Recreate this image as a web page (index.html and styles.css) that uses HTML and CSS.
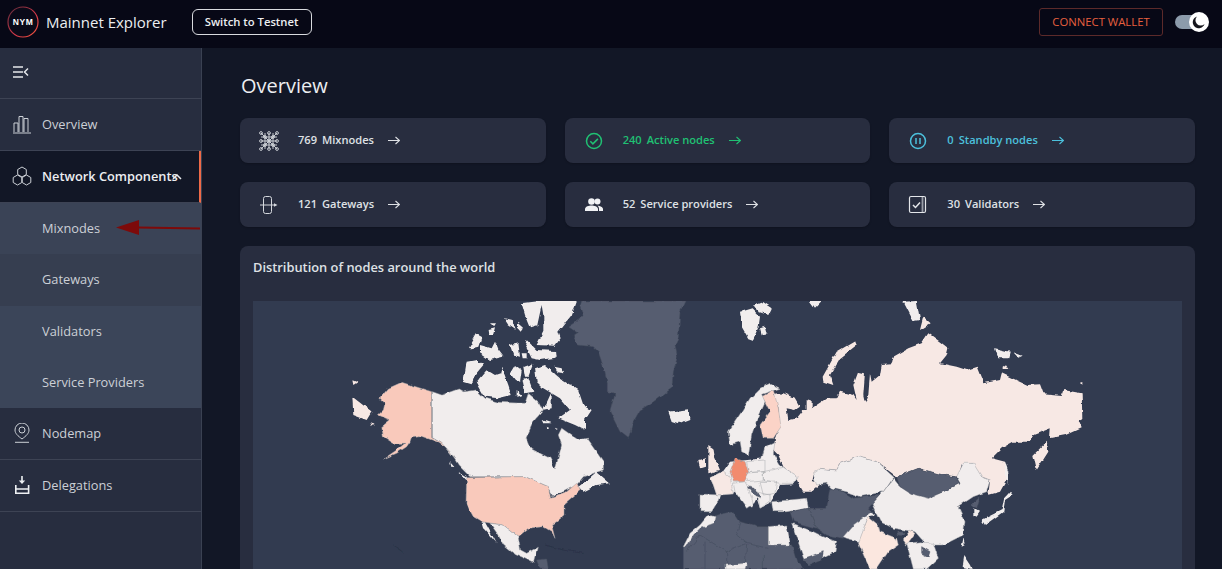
FILE: index.html
```html
<!DOCTYPE html>
<html lang="en">
<head>
<meta charset="utf-8">
<title>Mainnet Explorer</title>
<link rel="stylesheet" href="styles.css">
</head>
<body>
<header class="topbar">
  <svg class="logo" width="32" height="32" viewBox="0 0 32 32">
    <defs><linearGradient id="ring" x1="0" y1="0" x2="1" y2="1"><stop offset="0" stop-color="#5a2a3a"/><stop offset=".6" stop-color="#d8394a"/><stop offset="1" stop-color="#f0553a"/></linearGradient></defs>
    <circle cx="16" cy="16" r="15" fill="#0a0a18" stroke="url(#ring)" stroke-width="1.2"/>
    <text x="16" y="19" text-anchor="middle" class="logo-text">NYM</text>
  </svg>
  <span class="brand">Mainnet Explorer</span>
  <button class="switch-btn">Switch to Testnet</button>
  <div class="topbar-right">
    <button class="wallet-btn">CONNECT WALLET</button>
    <div class="toggle">
      <span class="thumb"><svg width="20" height="20" viewBox="0 0 20 20"><path d="M8 4.500a6 6 0 1 0 7.500 7.500a5 5 0 0 1-7.500-7.500z" fill="#15151c"/></svg></span>
    </div>
  </div>
</header>
<div class="shell">
  <nav class="sidebar">
    <div class="collapse-row">
      <svg width="16" height="14" viewBox="0 0 16 14" fill="none" stroke="#e6e8ec" stroke-width="1.500"><path d="M0 2h10M0 7h10M0 12h10M15 3.500 11.500 7l3.500 3.500"/></svg>
    </div>
    <a class="nav-item">
      <svg class="nav-icon" width="20" height="20" viewBox="0 0 20 20" fill="none" stroke="#ccd0d6"><path d="M2 18V9h4v9M7 18V2.500h4V18M12 18V4.500h4V18M1 19h18"/></svg>
      <span>Overview</span>
    </a>
    <a class="nav-item nav-open">
      <svg class="nav-icon" width="20" height="20" viewBox="0 0 20 20" fill="none" stroke="#ccd0d6"><path d="M10 1l4.300 2.500v5L10 11 5.700 8.500v-5zM5.500 9l4.300 2.500v5L5.500 19 1.200 16.500v-5zM14.500 9l4.300 2.500v5L14.500 19l-4.300-2.500v-5z"/></svg>
      <span>Network Components</span>
      <svg class="chev" width="10" height="6" viewBox="0 0 10 6" fill="none" stroke="#e8eaee" stroke-width="1.500"><path d="M1 5l4-4 4 4"/></svg>
    </a>
    <a class="sub-item sub-first">Mixnodes</a>
    <a class="sub-item sub-second">Gateways</a>
    <a class="sub-item">Validators</a>
    <a class="sub-item">Service Providers</a>
    <a class="nav-item">
      <svg class="nav-icon" width="20" height="20" viewBox="0 0 20 20" fill="none" stroke="#ccd0d6"><path d="M10 16c-4-3-7-5.500-7-9a7 7 0 0 1 14 0c0 3.500-3 6-7 9z"/><circle cx="10" cy="7" r="3"/><path d="M3 19.300h14"/></svg>
      <span>Nodemap</span>
    </a>
    <a class="nav-item">
      <svg class="nav-icon" width="20" height="20" viewBox="0 0 20 20" fill="none" stroke="#eef0f3" stroke-width="1.600"><path d="M10 1v6" /><path d="M6.800 5.500h6.400L10 9z" fill="#eef0f3" stroke="none"/><path d="M3.800 10v8.200h12.800V10M3.800 14h12.800"/></svg>
      <span>Delegations</span>
    </a>
    <svg class="red-arrow" width="84" height="18" viewBox="0 0 84 18"><path d="M23 8.500 L84 9.500" stroke="#7d0a0a" stroke-width="2"/><path d="M0 8.500 23 1v15z" fill="#7d0a0a"/></svg>
  </nav>
  <main class="main">
    <h1 class="title">Overview</h1>
    <section class="cards">
      <a class="card">
        <svg class="card-icon" width="20" height="20" viewBox="0 0 20 20" fill="none" stroke="#d5d8dd" stroke-width=".9"><circle cx="2" cy="2" r="1.400"/><circle cx="10" cy="2" r="1.400"/><circle cx="18" cy="2" r="1.400"/><circle cx="2" cy="10" r="1.400"/><circle cx="18" cy="10" r="1.400"/><circle cx="2" cy="18" r="1.400"/><circle cx="10" cy="18" r="1.400"/><circle cx="18" cy="18" r="1.400"/><circle cx="6" cy="6" r="1.400"/><circle cx="14" cy="6" r="1.400"/><circle cx="6" cy="14" r="1.400"/><circle cx="14" cy="14" r="1.400"/><circle cx="10" cy="10" r="2"/><path d="M2 2l16 16M18 2 2 18M2 10h16M10 2v16M2 6h16M2 14h16M6 2v16M14 2v16"/></svg>
        <span class="num">769</span><span class="lbl">Mixnodes</span>
        <svg class="arrow" width="12" height="9" viewBox="0 0 12 9" fill="none" stroke="currentColor" stroke-width="1.100"><path d="M0 4.500h11M7.500 1l4 3.500-4 3.500"/></svg>
      </a>
      <a class="card card-green">
        <svg class="card-icon" width="20" height="20" viewBox="0 0 20 20" fill="none" stroke="#20c073" stroke-width="1.500"><circle cx="10" cy="10" r="7.500"/><path d="M6.300 10.300l2.600 2.600 5-5"/></svg>
        <span class="num">240</span><span class="lbl">Active nodes</span>
        <svg class="arrow" width="12" height="9" viewBox="0 0 12 9" fill="none" stroke="currentColor" stroke-width="1.100"><path d="M0 4.500h11M7.500 1l4 3.500-4 3.500"/></svg>
      </a>
      <a class="card card-blue">
        <svg class="card-icon" width="20" height="20" viewBox="0 0 20 20" fill="none" stroke="#4cc0dc" stroke-width="1.500"><circle cx="10" cy="10" r="7.500"/><path d="M8 7v6M12 7v6"/></svg>
        <span class="num">0</span><span class="lbl">Standby nodes</span>
        <svg class="arrow" width="12" height="9" viewBox="0 0 12 9" fill="none" stroke="currentColor" stroke-width="1.100"><path d="M0 4.500h11M7.500 1l4 3.500-4 3.500"/></svg>
      </a>
      <a class="card">
        <svg class="card-icon" width="20" height="20" viewBox="0 0 20 20" fill="none" stroke="#d5d8dd" stroke-width="1"><rect x="4.500" y="1.500" width="8" height="17" rx="2"/><path d="M1 10h14"/><path d="M15 8.200 18.500 10 15 11.800z" fill="#d5d8dd" stroke="none"/></svg>
        <span class="num">121</span><span class="lbl">Gateways</span>
        <svg class="arrow" width="12" height="9" viewBox="0 0 12 9" fill="none" stroke="currentColor" stroke-width="1.100"><path d="M0 4.500h11M7.500 1l4 3.500-4 3.500"/></svg>
      </a>
      <a class="card">
        <svg class="card-icon" width="20" height="20" viewBox="0 0 20 20"><g fill="#f0f1f4"><circle cx="7.500" cy="6.500" r="3.300"/><circle cx="13.500" cy="6.500" r="3"/><path d="M1 16v-2c0-2.500 4-3.500 6.500-3.500S14 11.500 14 14v2z"/><path d="M15 16v-2.200c0-1.300-.7-2.300-1.600-3 2.400.2 5.600 1.200 5.600 3.200v2z"/></g></svg>
        <span class="num">52</span><span class="lbl">Service providers</span>
        <svg class="arrow" width="12" height="9" viewBox="0 0 12 9" fill="none" stroke="currentColor" stroke-width="1.100"><path d="M0 4.500h11M7.500 1l4 3.500-4 3.500"/></svg>
      </a>
      <a class="card">
        <svg class="card-icon" width="20" height="20" viewBox="0 0 20 20" fill="none" stroke="#e4e6ea" stroke-width="1.200"><rect x="1.500" y="1.500" width="16" height="16" rx="1.500"/><path d="M14.500 2v15" stroke-width="1.800" stroke="#9a9ea8"/><path d="M5 10l2.500 2.500L12 7.500" stroke-width="1.500"/></svg>
        <span class="num">30</span><span class="lbl">Validators</span>
        <svg class="arrow" width="12" height="9" viewBox="0 0 12 9" fill="none" stroke="currentColor" stroke-width="1.100"><path d="M0 4.500h11M7.500 1l4 3.500-4 3.500"/></svg>
      </a>
    </section>
    <section class="map-card">
      <h2 class="map-title">Distribution of nodes around the world</h2>
      <div class="map">
        <svg class="map-svg" width="929" height="300" viewBox="253 301 929 300">
          <defs>
            <filter id="rough" x="0" y="0" width="100%" height="100%" filterUnits="objectBoundingBox">
              <feTurbulence type="fractalNoise" baseFrequency=".13" numOctaves="2" seed="4" result="n"/>
              <feDisplacementMap in="SourceGraphic" in2="n" scale="4" xChannelSelector="R" yChannelSelector="G"/>
              <feGaussianBlur stdDeviation=".35"/>
            </filter>
          </defs>
          <g filter="url(#rough)">
          <g transform="translate(250 295) scale(.33333)" class="land">
            <path class="dark" d="M995,18 1305,18 1290,50 1285,130 1275,150 1282,185 1270,230 1265,280 1210,320 1170,345 1150,380 1135,430 1110,410 1095,380 1080,350 1095,295 1072,290 1072,265 1065,230 1045,170 1030,155 985,150 970,125 985,115 955,95 1000,65 990,35Z"/>
            <path class="pale nb" d="M815,25 870,18 980,18 965,60 945,85 925,110 932,130 915,152 860,150 880,110 880,60 875,30 862,90 840,97 825,60Z"/>
            <path class="pale nb" d="M830,135 860,165 915,168 917,188 870,195 845,190 825,150Z"/>
            <path class="pale nb" d="M657,158 680,118 695,125 685,155 665,160ZM690,150 725,160 735,140 745,165 760,185 720,195 690,175ZM762,70 785,75 797,105 775,90ZM805,80 822,95 812,110 803,100ZM716,105 735,100 730,120 718,120ZM720,85 735,85 730,93ZM780,150 805,145 810,185 790,180ZM815,175 830,175 830,190 818,190Z"/>
            <path class="pale nb" d="M640,260 650,200 680,195 700,210 675,240 665,268ZM680,260 710,225 735,240 750,235 755,215 775,270 785,300 745,310 705,305 690,280ZM780,235 795,210 815,225 810,260 795,255ZM820,215 850,205 835,245 825,245ZM818,255 835,250 850,290 825,295ZM855,220 885,210 930,250 985,285 1000,330 1025,345 1005,375 1005,405 975,390 925,370 960,345 930,310 880,280 860,260ZM912,215 935,220 940,235 920,232ZM800,285 815,300 800,305Z"/>
            <path class="pale" d="M547,290 575,300 625,282 640,290 680,285 705,310 745,322 825,325 835,295 870,325 880,345 850,380 828,430 840,460 900,490 915,522 925,490 935,450 925,420 935,400 985,435 1010,430 1060,500 1060,525 1000,545 980,570 940,590 905,605 895,575 825,545 660,545 625,510 612,490 575,445 547,428Z"/>
            <path class="pale nb" d="M880,345 905,290 905,340ZM875,375 905,385 880,385ZM1005,560 1040,530 1080,565 1040,570 1000,590 985,575ZM600,498 615,515 605,515ZM625,530 650,545 655,562 640,545ZM890,395 900,400 895,405ZM915,395 925,400 920,405Z"/>
            <path class="sal" d="M455,262 545,290 545,428 575,445 600,470 612,490 590,460 560,440 510,422 485,425 480,440 470,455 440,475 400,492 440,465 465,445 430,445 400,425 395,395 420,375 385,360 400,345 405,325 390,310 415,280Z"/>
            <path class="sal" d="M650,548 825,545 895,575 902,610 945,595 980,565 992,585 945,625 945,660 920,680 905,690 915,730 905,710 880,695 835,700 805,725 760,690 695,680 670,665 648,625Z"/>
            <path class="pale" d="M720,685 760,690 805,725 812,765 830,775 862,757 850,802 825,790 790,775 760,750 745,720Z"/>
            <path class="pale nb" d="M695,682 705,682 740,745 700,700Z"/>
            <path class="dark" d="M860,795 890,792 895,822 870,822Z"/>
            <path class="rose nb" d="M307,305 365,350 350,375 310,360ZM307,256 322,262 310,270ZM358,385 375,390 362,392Z"/>
            <path class="pale nb" d="M1255,350 1315,343 1318,372 1285,385 1265,378Z"/>
            <path class="faint" d="M885,750 940,765 1000,775M430,750 460,770"/>
          </g>
          <g transform="translate(680 295) scale(.33333)" class="land">
            <path class="pale nb" d="M180,50 215,40 240,65 235,100 220,135 205,130 185,95ZM220,30 245,20 275,40 265,60 235,50ZM240,100 255,95 260,115 245,118ZM390,18 425,18 405,38 395,25ZM670,20 710,18 720,75 700,78ZM945,160 990,170 985,190 955,190ZM1000,172 1028,182 1015,188Z"/>
            <path class="rose nb" d="M730,65 752,85 720,105ZM428,245 470,170 525,138 530,150 480,190 450,240 460,270 430,260ZM965,215 975,208 985,222 965,222ZM1200,260 1207,258 1207,270ZM1060,480 1100,440 1105,470 1070,525Z"/>
            <path class="rose nb" d="M745,115 780,140 805,160 800,180 780,205 830,215 860,225 890,215 910,265 960,255 965,235 1040,270 1080,268 1090,295 1145,300 1150,285 1205,295 1207,370 1195,375 1205,400 1160,420 1110,430 1112,400 1060,420 1050,440 1000,440 965,460 935,490 975,500 985,545 960,590 925,600 930,555 905,545 875,505 845,510 835,545 790,540 715,520 650,545 590,500 535,485 480,505 470,525 420,520 400,540 398,555 425,565 395,590 370,590 355,565 345,540 310,515 295,480 280,465 285,430 300,390 295,340 280,300 310,295 345,310 360,335 345,345 320,340 325,375 350,370 370,345 380,345 380,315 395,320 395,340 440,310 470,310 480,290 520,300 530,315 520,270 535,230 555,235 550,300 560,345 548,345 565,300 570,235 575,260 600,240 605,210 635,208 640,185 685,160 725,145Z"/>
            <path class="sal2" d="M245,305 280,285 295,340 303,395 280,430 250,430 240,390 270,350 255,320Z"/>
            <path class="pale" d="M145,410 185,350 210,310 240,280 270,265 300,280 245,298 255,320 230,375 215,420 205,480 185,470 180,440 150,450Z"/>
            <path class="pale" d="M255,455 285,440 280,475 300,510 255,520 245,490Z"/>
            <path class="pale nb" d="M90,548 130,528 150,500 255,490 300,510 355,545 340,568 300,570 285,600 270,625 240,640 230,610 215,640 195,620 165,590 155,597 110,600 100,570Z"/>
            <path class="rose nb" d="M85,450 100,460 105,490 120,525 85,535 85,490ZM55,495 75,490 75,515 60,520Z"/>
            <path class="rose" d="M90,548 130,528 150,545 155,570 160,597 110,600 100,570Z"/>
            <path class="pale" d="M60,597 120,600 110,625 95,650 60,650Z"/>
            <path class="pale" d="M200,500 255,495 255,530 205,532ZM192,535 250,530 250,555 200,560ZM250,530 310,517 355,545 340,565 300,565 250,555ZM240,560 290,558 285,595 250,600ZM160,565 195,560 205,580 220,625 200,640 165,590ZM225,590 270,600 270,620 240,640 235,610ZM275,620 380,610 385,640 320,650 280,650Z"/>
            <path class="dark" d="M205,575 225,580 240,610 225,605Z"/>
            <path class="germ" d="M165,490 195,500 205,530 190,560 160,560 150,530Z"/>
            <path class="pale" d="M398,535 420,520 470,525 480,505 535,485 590,500 640,545 610,590 540,605 500,590 455,580 440,565 410,570Z"/>
            <path class="pale" d="M575,625 610,590 640,550 660,575 740,605 790,590 840,565 830,545 850,505 880,505 905,545 930,555 920,590 880,605 835,635 855,680 850,720 790,750 740,750 705,710 640,700 600,680Z"/>
            <path class="dark" d="M650,545 715,520 790,540 825,545 840,565 790,590 745,610 690,595 660,575Z"/>
            <path class="dark" d="M385,640 440,640 450,580 490,590 520,610 600,600 565,640 580,650 520,690 490,730 440,720 410,700ZM330,650 385,640 410,700 340,680ZM875,630 900,605 890,640Z"/>
            <path class="pale" d="M490,725 520,690 575,650 585,660 565,665 540,740 500,730Z"/>
            <path class="peach" d="M535,745 565,665 595,690 600,710 650,730 655,750 625,770 595,815 590,822 570,822 555,790Z"/>
            <path class="peach" d="M670,735 690,705 705,715 680,750Z"/>
            <path class="dark" d="M650,710 672,712 670,722 652,720Z"/>
            <path class="pale" d="M680,745 720,740 760,745 775,790 740,822 700,822Z"/>
            <path class="dark" d="M725,755 750,770 745,785 725,775Z"/>
            <path class="dark" d="M10,750 60,690 110,660 160,650 180,680 230,695 265,695 265,750 335,750 350,800 375,822 10,822Z"/>
            <path class="faint2" d="M60,720 140,770 200,745 265,760M60,720 20,770M140,770 140,822M180,680 170,720 200,745M200,745 195,822M250,780 250,822M75,740 75,822"/>
            <path class="pale" d="M10,755 30,715 60,690 85,660 105,665 100,685 60,700 40,720 20,755ZM265,695 320,690 332,750 265,750ZM135,810 200,805 195,822 135,822Z"/>
            <path class="pale" d="M335,685 400,710 430,725 470,740 465,770 385,810 370,785Z"/>
            <path class="dark" d="M372,790 430,770 425,795 385,812Z"/>
            <path class="pale nb" d="M905,675 965,645 972,610 990,590 998,600 975,615 970,650 915,690ZM880,640 900,650 890,665 880,660ZM850,730 855,750 845,755ZM850,780 870,810 875,822 845,815Z"/>
            <path class="pale nb" d="M0,350 25,345 28,365 0,385ZM975,500 985,530 985,570 975,540Z"/>
          </g>
          </g>
        </svg>
      </div>
    </section>
  </main>
</div>
</body>
</html>
```
FILE: styles.css
```css
* { box-sizing: border-box; }
html, body { margin: 0; height: 100%; overflow: hidden; }
body { font-family: "Open Sans", "Liberation Sans", sans-serif; background: #121726; color: #e6e8ec; width: 1222px; height: 569px; }

.topbar { height: 48px; background: #070816; display: flex; align-items: center; padding-left: 7px; padding-right: 18px; flex: none; }
.logo { flex: none; margin-top: -4px; }
.logo-text { font-family: "Liberation Sans", sans-serif; font-size: 8.500px; font-weight: 700; fill: #fff; letter-spacing: .6px; }
.brand { margin-left: 7px; font-size: 15px; font-weight: 500; color: #eceef1; margin-top: -4px; }
.switch-btn { margin-left: 25px; margin-top: -4px; width: 120px; height: 26px; background: transparent; border: 1px solid #d8dadf; border-radius: 6px; color: #eceef1; font: 600 11.250px "Open Sans", sans-serif; padding: 0 0 2px; }
.topbar-right { margin-left: auto; display: flex; align-items: center; margin-top: -4px; }
.wallet-btn { width: 124px; height: 28px; background: transparent; border: 1px solid #5c2a2a; border-radius: 3px; color: #e8603f; font: 400 11.300px "Open Sans", sans-serif; padding: 0 0 2px; }
.toggle { margin-left: 12px; width: 29px; height: 14px; border-radius: 7px; background: #8c9bab; position: relative; }
.thumb { position: absolute; right: -5px; top: -3px; width: 20px; height: 20px; border-radius: 50%; background: #fff; display: block; }
.thumb svg { display: block; }

.shell { display: flex; height: 521px; }
.sidebar { width: 202px; flex: none; background: #272d3f; border-right: 1px solid #3a4152; position: relative; height: 521px; }
.collapse-row { height: 51px; display: flex; align-items: center; padding-left: 13px; padding-bottom: 2px; border-bottom: 1px solid #3d4354; }
.nav-item { height: 52px; display: flex; align-items: center; padding-left: 12px; padding-bottom: 2px; font-size: 12.800px; color: #ccd0d6; border-bottom: 1px solid #3d4354; }
.nav-icon { flex: none; margin-right: 10px; }
.nav-open { background: #121726; color: #eceef1; font-weight: 600; border-right: 2px solid #ee6a48; position: relative; }
.chev { position: absolute; left: 172px; top: 23px; }
.sub-item { height: 51.250px; display: flex; align-items: center; padding-left: 42px; padding-bottom: 1px; font-size: 12.800px; color: #ccd0d6; background: #3b4559; }
.sub-first { background: #3a4356; }
.sub-second { background: #363e50; }
.red-arrow { position: absolute; left: 116px; top: 171px; }

.main { flex: 1; padding: 24px 27px 0 38px; overflow: hidden; min-width: 0; }
.title { margin: 0 0 19px 1px; font-size: 20px; line-height: 27px; font-weight: 500; color: #eceef1; }
.cards { display: grid; grid-template-columns: repeat(3, 1fr); gap: 19px; }
.card { height: 45px; border-radius: 8px; background: #282d3f; display: flex; align-items: center; padding-left: 19px; font-size: 11.100px; font-weight: 600; color: #dfe1e5; box-shadow: 0 1px 2px rgba(0,0,0,.2); }
.card-icon { flex: none; margin-right: 19px; }
.num { margin-right: 5px; padding-bottom: 2px; }
.lbl { padding-bottom: 2px; }
.arrow { margin-left: 14px; flex: none; }
.card-green { color: #20c073; }
.card-blue { color: #4cc0dc; }
.map-card { margin-top: 19px; background: #282d3f; border-radius: 8px; padding: 12px 13px 0; height: 340px; }
.map-title { margin: 0 0 24px; font-size: 12.850px; line-height: 19px; font-weight: 600; color: #dfe1e5; }
.map { background: #323b50; height: 300px; }
.map-svg { display: block; }
.land path { stroke: #a4a6aa; stroke-width: 1.500; stroke-linejoin: round; }
.land .nb { stroke: none; }
.land .dark { fill: #565d70; stroke: #474e60; }
.land .pale { fill: #f1eded; }
.land .sal { fill: #f9c9bb; }
.land .sal2 { fill: #fbd3c7; }
.land .rose { fill: #f7e8e4; }
.land .peach { fill: #fbe7df; }
.land .germ { fill: #f28b6e; }
.land .faint { fill: none; stroke: #222a3c; }
.land .faint2 { fill: none; stroke: #3f4659; }
```
